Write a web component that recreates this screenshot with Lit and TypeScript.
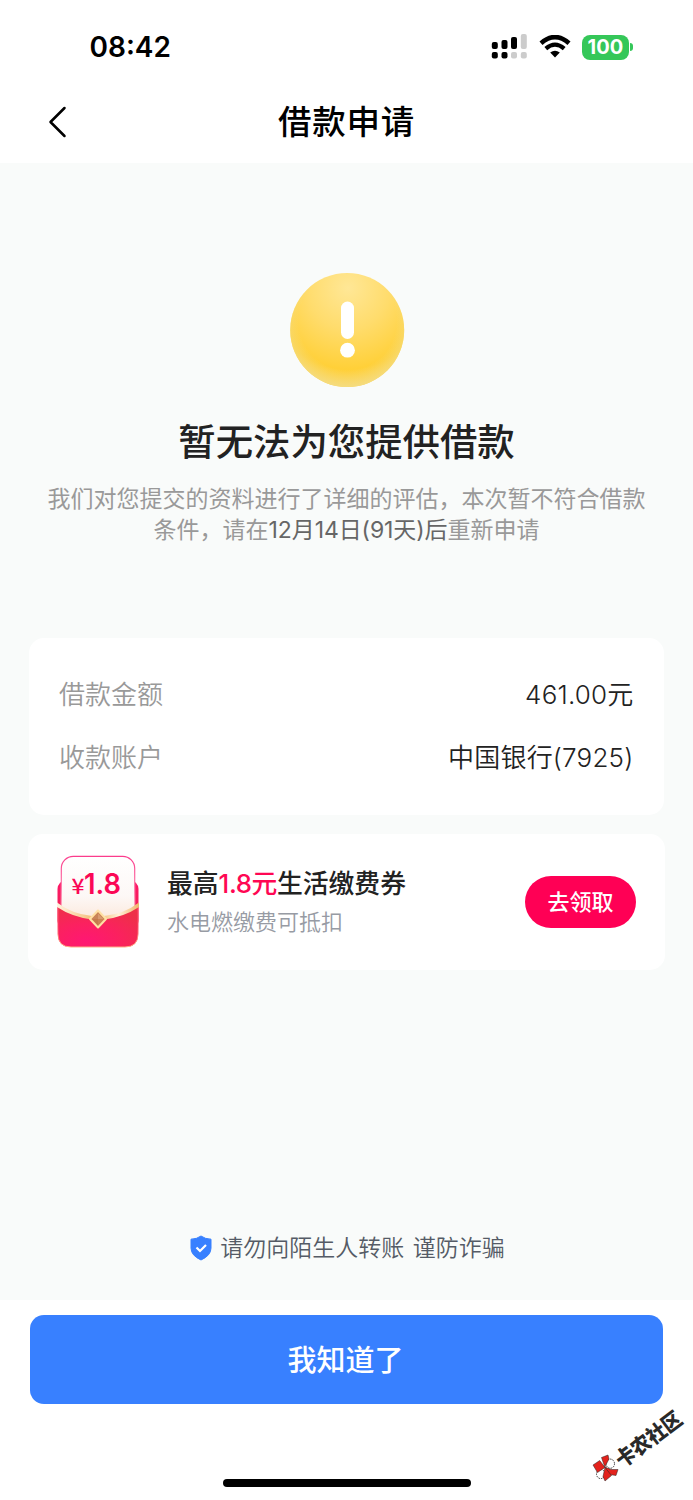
import { LitElement, html, css } from "lit";
import { customElement } from "lit/decorators.js";

@customElement("status-bar")
class StatusBar extends LitElement {
  static styles = css`
    :host { display: block; }
    .bar { display: flex; align-items: center; height: 94px; padding: 0 60px 0 89.500px; box-sizing: border-box; }
    .time { flex: 1; font-size: 28px; font-weight: 600; line-height: 34px; letter-spacing: 0; color: #000; }
    .signal { margin-right: 12px; }
    .wifi { margin-right: 11px; }
    svg { display: block; }
    .battery { display: flex; align-items: center; }
    .level { width: 47px; height: 25px; border-radius: 8px; background: #35c759; color: #fff; font-size: 20px; font-weight: 700; line-height: 25px; text-align: center; letter-spacing: 0.1px; }
    .cap { width: 3px; height: 8px; margin-left: 1px; border-radius: 0 4px 4px 0; background: #35c759; }
  `;
  render() {
    return html`<div class="bar">
      <span class="time">08:42</span>
      <svg class="signal" width="36" height="26" viewBox="0 0 36 26">
        <rect x="0.8" y="8" width="6" height="7" rx="2" />
        <rect x="10.5" y="6" width="6" height="9" rx="2" />
        <rect x="20" y="3" width="6" height="12" rx="2" />
        <rect x="29.8" y="0" width="6" height="15" rx="2" fill="#ccc" />
        <rect x="0.8" y="18" width="6" height="6.5" rx="2" />
        <rect x="10.5" y="18" width="6" height="6.5" rx="2" />
        <rect x="20" y="18" width="6" height="6.5" rx="2" fill="#ccc" />
        <rect x="29.8" y="18" width="6" height="6.5" rx="2" fill="#ccc" />
      </svg>
      <svg class="wifi" width="32" height="24" viewBox="0 0 32 24">
        <path d="M2 8.2Q16 -4 30 8.2" fill="none" stroke="#000" stroke-width="4.600" />
        <path d="M6.800 13.600Q16 5.600 25.200 13.600" fill="none" stroke="#000" stroke-width="4.200" />
        <path d="M11.200 17.600Q16 13.800 20.800 17.600L16 22.500Z" />
      </svg>
      <div class="battery"><div class="level">100</div><div class="cap"></div></div>
    </div>`;
  }
}

@customElement("coupon-envelope")
class CouponEnvelope extends LitElement {
  static styles = css`
    :host { display: block; width: 84px; height: 94px; }
    svg { display: block; }
    .price { font-size: 28px; font-weight: 600; fill: #fb0755; }
    .yen { font-family: "Noto Sans CJK SC", sans-serif; font-size: 21px; font-weight: 500; fill: #fb0755; }
  `;
  render() {
    return html`<svg width="84" height="94" viewBox="0 0 84 94">
      <defs>
        <linearGradient id="back" x1="0" y1="0" x2="0" y2="1">
          <stop offset="0" stop-color="#ff1768" /><stop offset="1" stop-color="#e8264c" />
        </linearGradient>
        <linearGradient id="paper" x1="0" y1="0" x2="0" y2="1">
          <stop offset="0" stop-color="#fff" /><stop offset="0.55" stop-color="#fdf8f6" /><stop offset="1" stop-color="#fbe3d3" />
        </linearGradient>
        <linearGradient id="edge" x1="0" y1="0" x2="0" y2="1">
          <stop offset="0" stop-color="#fb3c8c" /><stop offset="1" stop-color="#ffd2d2" />
        </linearGradient>
        <radialGradient id="front" cx="0.35" cy="0.85" r="0.85">
          <stop offset="0" stop-color="#ff1773" /><stop offset="0.5" stop-color="#fb215f" /><stop offset="1" stop-color="#ee3048" />
        </radialGradient>
        <linearGradient id="rim" x1="0" y1="0" x2="1" y2="0">
          <stop offset="0" stop-color="#fff3df" /><stop offset="0.5" stop-color="#f3b76c" /><stop offset="0.75" stop-color="#fff0d8" /><stop offset="1" stop-color="#f0b66b" />
        </linearGradient>
        <linearGradient id="bottom" x1="0" y1="0" x2="0" y2="1">
          <stop offset="0.5" stop-color="#ff4b68" /><stop offset="1" stop-color="#ffb088" />
        </linearGradient>
      </defs>
      <rect x="1.5" y="25" width="81" height="50" rx="9" fill="url(#back)" />
      <rect x="5.3" y="1.400" width="73.4" height="72" rx="12" fill="url(#paper)" stroke="url(#edge)" stroke-width="1.2" />
      <path d="M2 51Q14 60 36 64L42 68L48 64Q70 60 82 51V79Q82 92 69 92H15Q2 92 2 79Z" fill="url(#front)" stroke="url(#bottom)" stroke-width="1" />
      <path d="M1 47.500Q16 59 36 61L42 63L48 61Q68 59 83 47.500V52Q68 62 48 64.500L42 67L36 64.500Q16 62 1 52Z" fill="url(#rim)" />
      <path d="M42 55.500L50 64L42 72.500L34 64Z" fill="#cc8453" stroke="#ffe1a5" stroke-width="2" stroke-linejoin="round" />
      <path d="M42 58.500L47.500 64H36.500Z" fill="#d89b70" /><path d="M42 58.500V70.500L36.500 64Z" fill="#bd7247" opacity="0.55" />
      <text class="yen" x="15.500" y="38.500" textLength="13" lengthAdjust="spacingAndGlyphs">¥</text>
      <text class="price" x="28" y="39" textLength="37" lengthAdjust="spacingAndGlyphs">1.8</text>
    </svg>`;
  }
}

@customElement("community-mark")
class CommunityMark extends LitElement {
  static styles = css`
    :host { display: block; }
    svg { display: block; overflow: visible; }
    .name { font-family: "Noto Sans CJK SC", sans-serif; font-size: 21px; font-weight: 900; fill: #292929; }
  `;
  render() {
    return html`<svg width="103" height="86" viewBox="590 1404 103 86">
      <g stroke="#222" stroke-width="0.500">
        <ellipse cx="610.300" cy="1463.700" rx="4.200" ry="4.600" fill="#fff" stroke-width="0.900" stroke-dasharray="1.500 1" />
        <ellipse cx="600.700" cy="1474" rx="4.200" ry="4.600" fill="#fff" stroke-width="0.900" stroke-dasharray="1.500 1" />
        <path d="M593 1465L599.700 1460.500L605 1467.500L597.500 1472.500Z" fill="#e3221c" />
        <path d="M601.500 1457.500L608 1455L609 1459L604.800 1467Z" fill="#e3221c" />
        <path d="M605 1467L611 1469.500L618 1469.500L616 1475.500L609.500 1474.500Z" fill="#e3221c" />
        <path d="M605 1467.500L611.500 1475.500L605 1481L603 1476.500Z" fill="#e3221c" />
      </g>
      <text class="name" transform="translate(622.500 1468.500) rotate(-37)" textLength="77" lengthAdjust="spacingAndGlyphs">卡农社区</text>
    </svg>`;
  }
}

@customElement("app-root")
class AppRoot extends LitElement {
  static styles = css`
    :host { display: block; font-family: Inter, "Noto Sans CJK SC", sans-serif; color: #222; }
    .screen { display: flex; flex-direction: column; width: 693px; height: 1500px; background: #f9fbfa; overflow: hidden; position: relative; }
    svg { display: block; }
    .top { height: 163px; background: #fff; }
    .nav { display: grid; grid-template-columns: 100px 1fr 100px; align-items: center; height: 55px; }
    .back { margin-left: 47px; }
    .nav-title { text-align: center; font-size: 33.500px; font-weight: 500; letter-spacing: 0.800px; line-height: 50px; color: #000; }
    .content { display: flex; flex-direction: column; flex: 1; }
    .result { display: flex; flex-direction: column; align-items: center; padding-top: 110px; height: 475px; box-sizing: border-box; }
    .warning { margin-left: 1px; }
    .headline { margin-top: 29px; font-size: 37.400px; font-weight: 500; line-height: 52px; white-space: nowrap; }
    .reason { margin-top: 15px; width: 620px; text-align: center; font-size: 23px; line-height: 31px; color: #999; white-space: nowrap; }
    .reason .strong { color: #666; letter-spacing: -0.080px; }
    .card { margin: 0 29px; background: #fff; border-radius: 15px; height: 177px; box-sizing: border-box; padding: 23.500px 30px 0; }
    .row { display: flex; justify-content: space-between; align-items: center; height: 62.500px; font-size: 26px; font-weight: 350; }
    .label { color: #999; }
    .value { letter-spacing: 0.200px; margin-right: 0.500px; }
    .coupon { display: flex; align-items: center; margin: 19px 28px 0; height: 136px; padding: 0 29px 0 28px; box-sizing: border-box; background: #fff; border-radius: 15px; }
    .coupon-text { flex: 1; margin-left: 27px; white-space: nowrap; }
    .coupon-title { font-size: 25.800px; font-weight: 500; line-height: 38px; }
    .accent { color: #ff0753; letter-spacing: -0.400px; }
    .coupon-note { font-size: 22px; font-weight: 350; line-height: 34px; color: #979ba4; margin-top: 2px; }
    .claim { width: 111px; height: 52px; border: 0; border-radius: 26px; background: #ff0055; color: #fff; font: inherit; font-size: 22px; font-weight: 500; line-height: 52px; padding: 0; }
    .notice { display: flex; justify-content: center; align-items: center; gap: 8px; margin-top: auto; margin-bottom: 35px; padding-left: 2px; font-size: 23px; font-weight: 350; line-height: 34px; color: #555b66; word-spacing: 2px; }
    .footer { display: flex; flex-direction: column; align-items: center; height: 200px; padding: 15px 30px 0; box-sizing: border-box; background: #fff; }
    .confirm { width: 100%; height: 89px; border: 0; border-radius: 14px; background: #3880ff; color: #fff; font: inherit; font-size: 29px; font-weight: 500; padding: 0 2px 4px 0; }
    .home { width: 248px; height: 8px; margin-top: 75px; border-radius: 4px; background: #000; }
    .mark { position: absolute; left: 590px; top: 1404px; }
  `;
  render() {
    return html`<main class="screen">
      <header class="top">
        <status-bar></status-bar>
        <div class="nav">
          <svg class="back" width="22" height="34" viewBox="0 0 22 34"><path d="M17.500 3L3.500 17L17.500 31" fill="none" stroke="#000" stroke-width="2.500" stroke-linecap="round" stroke-linejoin="round" /></svg>
          <div class="nav-title">借款申请</div>
        </div>
      </header>
      <div class="content">
        <section class="result">
          <svg class="warning" width="115" height="115" viewBox="0 0 115 115">
            <defs>
              <radialGradient id="sun" gradientUnits="userSpaceOnUse" cx="58" cy="15" r="104">
                <stop offset="0" stop-color="#ffe796" /><stop offset="0.4" stop-color="#ffdc6c" /><stop offset="0.78" stop-color="#ffd038" /><stop offset="1" stop-color="#ffd34d" />
              </radialGradient>
              <radialGradient id="haze" gradientUnits="userSpaceOnUse" cx="57.500" cy="48" r="67">
                <stop offset="0.73" stop-color="#f4dc82" stop-opacity="0" /><stop offset="1" stop-color="#f4dc82" />
              </radialGradient>
            </defs>
            <circle cx="57.200" cy="57" r="57" fill="url(#sun)" />
            <circle cx="57.200" cy="57" r="57" fill="url(#haze)" />
            <rect x="51" y="28.500" width="13" height="37.500" rx="6.500" fill="#fff" />
            <circle cx="57.500" cy="77.200" r="7.400" fill="#fff" />
          </svg>
          <div class="headline">暂无法为您提供借款</div>
          <div class="reason">我们对您提交的资料进行了详细的评估，本次暂不符合借款<br />条件，请在<span class="strong">12月14日(91天)后</span>重新申请</div>
        </section>
        <section class="card">
          <div class="row"><span class="label">借款金额</span><span class="value">461.00元</span></div>
          <div class="row"><span class="label">收款账户</span><span class="value">中国银行(7925)</span></div>
        </section>
        <section class="coupon">
          <coupon-envelope></coupon-envelope>
          <div class="coupon-text">
            <div class="coupon-title">最高<span class="accent">1.8元</span>生活缴费券</div>
            <div class="coupon-note">水电燃缴费可抵扣</div>
          </div>
          <button class="claim">去领取</button>
        </section>
        <div class="notice">
          <svg width="22" height="26" viewBox="0 0 22 26"><path d="M11 1Q15 4 21 4.200V13Q21 20.500 11 25Q1 20.500 1 13V4.200Q7 4 11 1Z" fill="#3880ff" stroke="#3880ff" stroke-linejoin="round" /><path d="M6.500 12.500L10 16L16 10" fill="none" stroke="#fff" stroke-width="2.200" /></svg>
          <span>请勿向陌生人转账 谨防诈骗</span>
        </div>
      </div>
      <footer class="footer">
        <button class="confirm">我知道了</button>
        <div class="home"></div>
      </footer>
      <community-mark class="mark"></community-mark>
    </main>`;
  }
}
